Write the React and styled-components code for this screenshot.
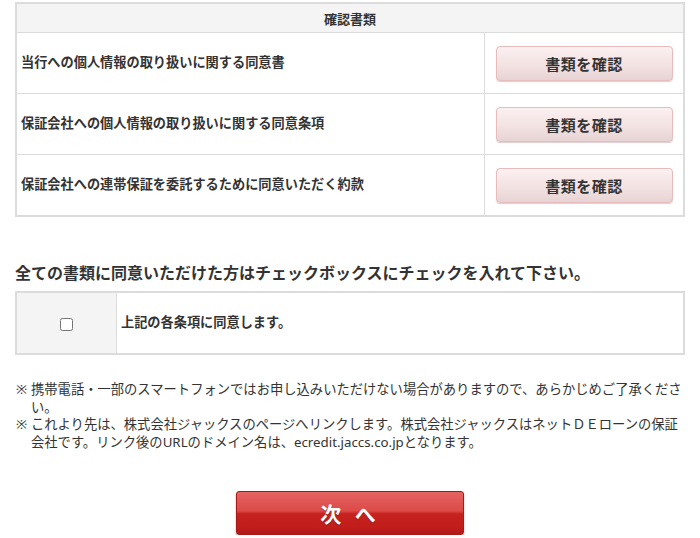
import styled, { createGlobalStyle } from "styled-components";

const docs = [
  "当行への個人情報の取り扱いに関する同意書",
  "保証会社への個人情報の取り扱いに関する同意条項",
  "保証会社への連帯保証を委託するために同意いただく約款",
];

const notes = [
  "携帯電話・一部のスマートフォンではお申し込みいただけない場合がありますので、あらかじめご了承ください。",
  "これより先は、株式会社ジャックスのページへリンクします。株式会社ジャックスはネットＤＥローンの保証会社です。リンク後のURLのドメイン名は、ecredit.jaccs.co.jpとなります。",
];

const App = () => {
  return (
    <>
      <GlobalStyle />
      <Page>
        <Table>
          <thead>
            <tr>
              <HeadCell colSpan={2}>確認書類</HeadCell>
            </tr>
          </thead>
          <tbody>
            {docs.map((d) => (
              <tr key={d}>
                <DocCell>{d}</DocCell>
                <ActionCell>
                  <DocButton type="button">書類を確認</DocButton>
                </ActionCell>
              </tr>
            ))}
          </tbody>
        </Table>

        <Lead>全ての書類に同意いただけた方はチェックボックスにチェックを入れて下さい。</Lead>

        <Table>
          <tbody>
            <tr>
              <CheckCell>
                <input type="checkbox" />
              </CheckCell>
              <DocCell>上記の各条項に同意します。</DocCell>
            </tr>
          </tbody>
        </Table>

        <Notes>
          {notes.map((n) => (
            <Note key={n}>{n}</Note>
          ))}
        </Notes>

        <Footer>
          <NextButton type="button">次 へ</NextButton>
        </Footer>
      </Page>
    </>
  );
};

export default App;

const GlobalStyle = createGlobalStyle`
  body {
    margin: 0;
    background: #fff;
    color: #333;
    font-family: "Noto Sans", "Noto Sans CJK JP", sans-serif;
  }
`;

const Page = styled.main`
  width: 700px;
  padding: 2px 15px 0;
  box-sizing: border-box;
`;

const Table = styled.table`
  width: 100%;
  border-collapse: collapse;
  border: 2px solid #dcdcdc;
  font-size: 13.2px;
  font-weight: bold;
`;

const HeadCell = styled.th`
  height: 28px;
  padding: 0;
  background: #f4f4f4;
  border-bottom: 1px solid #dcdcdc;
  text-align: center;
  font-size: 13px;
`;

const DocCell = styled.td`
  height: 60px;
  padding: 0 0 0 4px;
  border: 1px solid #dcdcdc;
  text-align: left;
  line-height: 1.3;
`;

const ActionCell = styled.td`
  width: 198px;
  padding: 0;
  border: 1px solid #dcdcdc;
  text-align: center;
`;

const CheckCell = styled.td`
  width: 99px;
  height: 58px;
  padding: 0;
  background: #f4f4f4;
  border: 1px solid #dcdcdc;
  text-align: center;

  input {
    margin: 0;
    width: 13px;
    height: 13px;
    vertical-align: middle;
  }
`;

const DocButton = styled.button`
  width: 177px;
  height: 35px;
  margin-top: 1px;
  border: 1px solid #e6bcbc;
  border-radius: 4px;
  background: linear-gradient(#fcf0f0, #f3e2e2 55%, #e7d3d3);
  box-shadow: 0 1px 1px rgba(120, 60, 60, 0.25);
  color: #333;
  font-family: inherit;
  font-size: 15px;
  font-weight: bold;
  letter-spacing: 0.5px;
  cursor: pointer;
`;

const Lead = styled.h2`
  margin: 45px 0 7px;
  font-size: 16px;
  font-weight: bold;
  line-height: 22px;
`;

const Notes = styled.ul`
  list-style: none;
  margin: 26px 0 0;
  padding: 0 0 0 16px;
  font-size: 13.3px;
  line-height: 17.5px;
`;

const Note = styled.li`
  position: relative;

  &::before {
    content: "※";
    position: absolute;
    left: -15px;
  }
`;

const Footer = styled.div`
  display: flex;
  justify-content: center;
  padding-top: 40px;
`;

const NextButton = styled.button`
  width: 228px;
  height: 44px;
  border: 1px solid #a81a18;
  border-radius: 3px;
  background: linear-gradient(
    #e46462 0%,
    #dc4a47 45%,
    #c6221f 52%,
    #c01d1b 85%,
    #b01a18 100%
  );
  box-shadow: 0 2px 2px rgba(0, 0, 0, 0.35);
  color: #fff;
  font-family: inherit;
  font-size: 21px;
  font-weight: bold;
  letter-spacing: 4px;
  text-shadow: 0 1px 1px rgba(0, 0, 0, 0.3);
  cursor: pointer;
`;
